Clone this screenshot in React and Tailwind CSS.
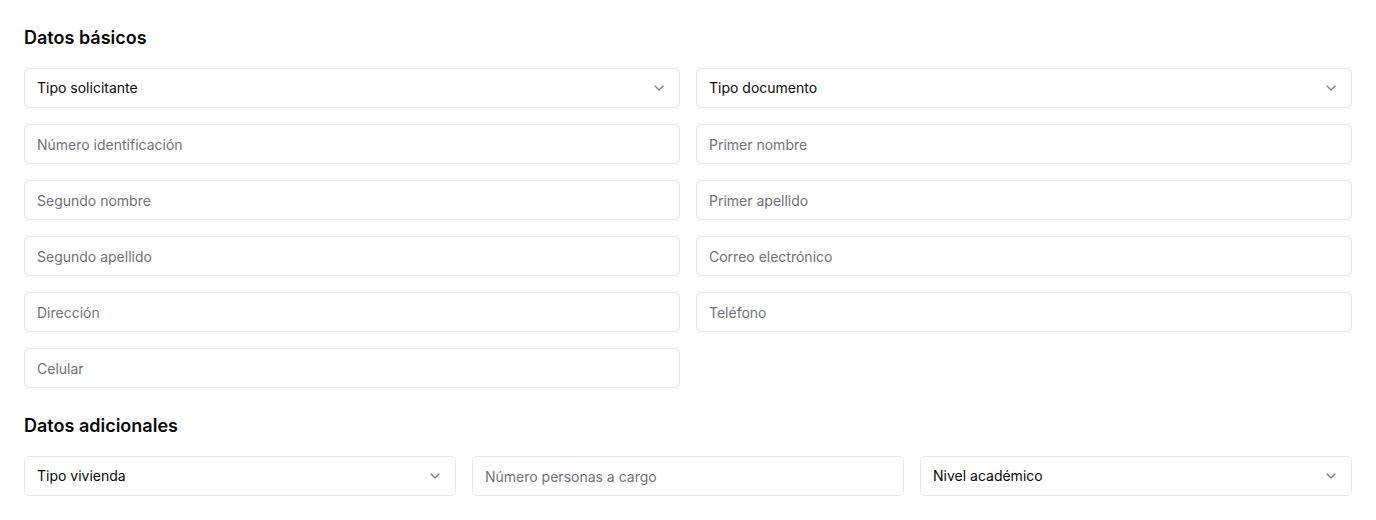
import React from 'react';
import { ChevronDown } from 'lucide-react';

const SelectBox = ({ label }) => (
    <button
        type="button"
        className="flex h-10 w-full items-center justify-between rounded-md border border-[#e4e4e7] bg-white px-3 text-sm text-[#09090b]"
    >
        <span>{label}</span>
        <ChevronDown className="h-4 w-4 text-[#09090b] opacity-50" />
    </button>
);

const TextBox = ({ placeholder }) => (
    <input
        type="text"
        placeholder={placeholder}
        className="h-10 w-full rounded-md border border-[#e4e4e7] bg-white px-3 text-sm text-[#09090b] placeholder:text-[#71717a] outline-none"
    />
);

const App = () => {
    return (
        <div className="min-h-screen bg-white p-6 font-['Inter',sans-serif] text-[#09090b]">
            <div className="space-y-6">
                {/* Datos básicos */}
                <section>
                    <h2 className="mb-4 text-lg font-semibold">Datos básicos</h2>
                    <div className="grid grid-cols-2 gap-4">
                        <SelectBox label="Tipo solicitante" />
                        <SelectBox label="Tipo documento" />
                        <TextBox placeholder="Número identificación" />
                        <TextBox placeholder="Primer nombre" />
                        <TextBox placeholder="Segundo nombre" />
                        <TextBox placeholder="Primer apellido" />
                        <TextBox placeholder="Segundo apellido" />
                        <TextBox placeholder="Correo electrónico" />
                        <TextBox placeholder="Dirección" />
                        <TextBox placeholder="Teléfono" />
                        <TextBox placeholder="Celular" />
                    </div>
                </section>

                {/* Datos adicionales */}
                <section>
                    <h2 className="mb-4 text-lg font-semibold">Datos adicionales</h2>
                    <div className="grid grid-cols-3 gap-4">
                        <SelectBox label="Tipo vivienda" />
                        <TextBox placeholder="Número personas a cargo" />
                        <SelectBox label="Nivel académico" />
                    </div>
                </section>
            </div>
        </div>
    );
};

export default App;
